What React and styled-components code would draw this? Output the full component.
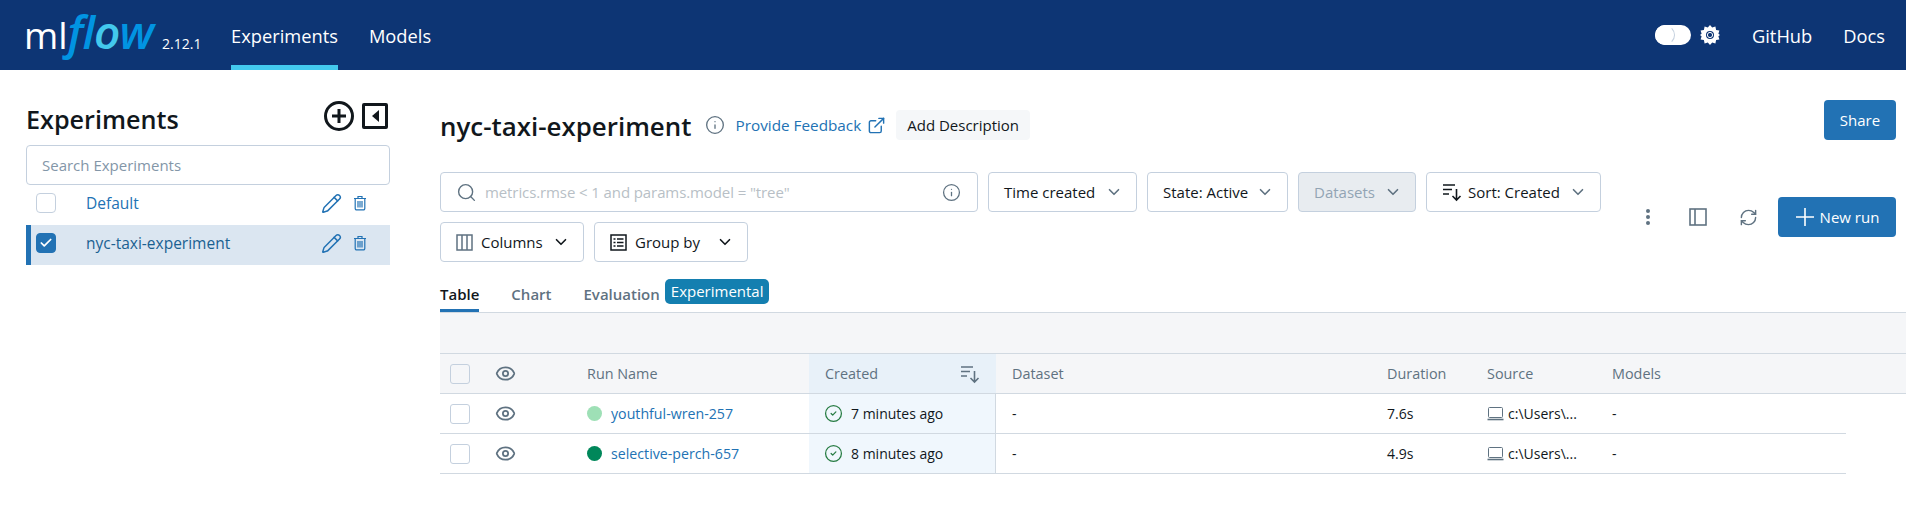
import React from "react";
import styled, { createGlobalStyle } from "styled-components";
import { Info, ExternalLink, Search, ChevronDown, RefreshCw, Check, Pencil, CircleCheck, Eye } from "lucide-react";

const Global = createGlobalStyle`
  html, body { margin: 0; padding: 0; background: #fff; }
  body { font-family: "Open Sans", "Noto Sans", sans-serif; font-size: 15px; color: #11171c; overflow: hidden; }
  * { box-sizing: border-box; }
`;
const Page = styled.div`width: 1906px; height: 505px; overflow: hidden; display: flex; flex-direction: column;`;
const TopBar = styled.header`height: 70px; flex: none; background: #0d3574; color: #fff; display: flex; align-items: stretch; padding: 0 0 0 26px;`;
const Logo = styled.div`width: 205px; flex: none; display: flex; align-items: baseline; padding-top: 13px; line-height: 36px; white-space: nowrap;`;
const LogoMl = styled.span`font-size: 37px; font-weight: 500; letter-spacing: 0; color: #fff; margin-left: -2px;`;
const LogoFlow = styled.span`font-size: 46px; font-weight: 600; font-style: italic; letter-spacing: -1px; color: #0194e2;`;
const LogoO = styled.span`color: #43c9ed;`;
const Version = styled.span`font-size: 14px; color: #fff; margin-left: 9px;`;
const NavLink = styled.a`font-size: 18.3px; color: #fff; display: flex; align-items: center; margin-right: ${p => p.$mr ?? 31}px; border-bottom: 5px solid ${p => (p.$active ? "#43c9ed" : "transparent")}; border-top: 5px solid transparent;`;
const Spacer = styled.div`flex: 1;`;
const Toggle = styled.div`width: 36px; height: 20px; border-radius: 10px; background: #fff; align-self: center; position: relative; margin-right: 9px; flex: none;`;
const Knob = styled.div`position: absolute; left: 0; top: 0; width: 20px; height: 20px; border-radius: 50%; background: #fff; border: 1px solid #c4d0de; border-left-color: #fff; border-top-color: #fff; border-bottom-color: #fff;`;
const GearWrap = styled.div`align-self: center; display: flex; margin-right: 32px;`;
const Body = styled.div`flex: 1; display: flex; min-height: 0;`;
const Side = styled.aside`width: 440px; flex: none; padding: 31px 50px 0 26px; display: flex; flex-direction: column;`;
const SideHead = styled.div`display: flex; align-items: flex-start; height: 44px; flex: none;`;
const SideTitle = styled.h1`font-size: 25.2px; font-weight: 600; margin: 2px 0 0; line-height: 32px; flex: 1; color: #11171c;`;
const BoxIcon = styled.div`width: 26px; height: 26px; margin-top: 2px; border: 3px solid #11171c; border-radius: 2px; margin-left: 8px; margin-right: 2px; display: flex; align-items: center; justify-content: center;`;
const Tri = styled.div`width: 0; height: 0; border-top: 6px solid transparent; border-bottom: 6px solid transparent; border-right: 7px solid #11171c;`;
const SearchBox = styled.div`height: 40px; border: 1px solid #c4d0de; border-radius: 4px; padding: 0 15px; display: flex; align-items: center; color: #8396a8; font-size: 15px; flex: none;`;
const ExpRow = styled.div`height: 40px; display: flex; align-items: center; padding: 0 23px 4px 5px; color: #2272b4; font-size: 15.5px; background: ${p => (p.$sel ? "#dbe6f1" : "transparent")}; border-left: 5px solid ${p => (p.$sel ? "#2272b4" : "transparent")}; flex: none;`;
const ExpBox = styled.div`width: 20px; height: 20px; border-radius: 4px; border: 1px solid ${p => (p.$on ? "#2272b4" : "#c4d0de")}; background: ${p => (p.$on ? "#2272b4" : "#fff")}; display: flex; align-items: center; justify-content: center; flex: none; margin-right: 30px;`;
const ExpName = styled.span`flex: 1; color: ${p => (p.$sel ? "#1a6191" : "#2272b4")};`;
const Main = styled.main`flex: 1; min-width: 0; padding: 30px 10px 0 0; display: flex; flex-direction: column;`;
const TitleRow = styled.div`display: flex; align-items: center; height: 50px; flex: none;`;
const Title = styled.h2`font-size: 25.9px; font-weight: 600; margin: 2px 14px 0 0; line-height: 32px; color: #11171c;`;
const Feedback = styled.a`color: #2272b4; font-size: 15.3px; margin: 0 6px 0 10px;`;
const GhostBtn = styled.button`height: 30px; background: #f5f7f9; border: 0; border-radius: 4px; padding: 0 11px; font: inherit; font-size: 15px; color: #11171c; margin-left: 10px;`;
const PrimaryBtn = styled.button`height: 40px; width: ${p => p.$w}px; background: #2272b4; border: 0; border-radius: 4px; color: #fff; font: inherit; font-size: 15px; display: flex; align-items: center; justify-content: center; gap: 5px; flex: none; margin-left: ${p => p.$ml ?? 0}px; align-self: ${p => (p.$top ? "flex-start" : "auto")};`;
const FilterArea = styled.div`display: flex; align-items: center; margin-top: 22px; flex: none;`;
const Filters = styled.div`width: 1170px; flex: none; display: flex; flex-wrap: wrap; gap: 10px; margin-right: 13px;`;
const RunSearch = styled.div`width: 538px; height: 40px; border: 1px solid #c4d0de; border-radius: 4px; display: flex; align-items: center; padding: 0 16px 0 15px; gap: 8px; font-size: 15px; color: #b8bfc6;`;
const RunSearchText = styled.span`flex: 1; letter-spacing: -0.1px;`;
const Drop = styled.div`width: ${p => p.$w}px; height: 40px; border: 1px solid #c4d0de; border-radius: 4px; display: flex; align-items: center; justify-content: space-between; padding: 0 13px 0 15px; background: ${p => (p.$off ? "#e8ecf0" : "#fff")}; color: ${p => (p.$off ? "#92a4b4" : "#11171c")}; font-size: 15px;`;
const DropLabel = styled.span`display: flex; align-items: center; gap: ${p => p.$gap ?? 6}px; white-space: nowrap;`;
const Actions = styled.div`display: flex; align-items: center; flex: 1; justify-content: flex-start;`;
const ActionIcon = styled.div`width: 50px; display: flex; justify-content: center; color: #5f7281; flex: none;`;
const Tabs = styled.div`display: flex; align-items: flex-end; margin-top: 16px; height: 34px; flex: none;`;
const Tab = styled.div`height: 100%; padding-top: 6px; font-size: 15px; font-weight: 600; color: ${p => (p.$on ? "#11171c" : "#5f7281")}; border-bottom: 3px solid ${p => (p.$on ? "#2272b4" : "transparent")}; margin-right: ${p => p.$mr}px;`;
const Badge = styled.div`height: 25px; align-self: flex-start; margin-top: 1px; padding: 0 6px; background: #147fb0; color: #fff; border-radius: 5px; font-size: 15px; line-height: 25px;`;
const Table = styled.div`margin-right: -10px; border-top: 1px solid #d1d9e1; flex: none;`;
const Band = styled.div`height: 41px; background: #f5f6f8; border-bottom: 1px solid #d1d9e1;`;
const grid = "50px 80px 239px 187px 375px 100px 125px 250px";
const HeadRow = styled.div`display: grid; grid-template-columns: ${grid} 1fr; height: 40px; background: #f5f6f8; border-bottom: 1px solid #d1d9e1; color: #5f7281; font-size: 14.4px; font-weight: 500;`;
const Row = styled.div`display: grid; grid-template-columns: ${grid}; height: 40px; border-bottom: 1px solid #d1d9e1; font-size: 14px; width: 1406px;`;
const Cell = styled.div`display: flex; align-items: center; padding-left: ${p => p.$pl ?? 16}px; white-space: nowrap; min-width: 0;`;
const CreatedHead = styled(Cell)`background: #e8f1f9; justify-content: space-between; padding-right: 16px;`;
const CreatedCell = styled(Cell)`background: #f0f7fd; border-right: 1px solid #d1d9e1; gap: 8px; padding-left: 15px;`;
const TableBox = styled.div`width: 20px; height: 20px; border: 1px solid #c4d0de; border-radius: 3px; background: ${p => (p.$head ? "#f5f6f8" : "#fff")}; margin-left: 10px;`;
const Dot = styled.span`width: 15px; height: 15px; border-radius: 50%; background: ${p => p.$c}; margin-right: 9px; flex: none;`;
const RunLink = styled.a`color: #2272b4; font-size: 14.2px;`;
const Src = styled.span`display: flex; align-items: center; gap: 4px;`;
const Plain = styled.span`display: flex; color: ${p => p.$c};`;

const Trash = () => (
  <svg width="14" height="16" viewBox="0 0 14 16" fill="none" stroke="#2272b4" strokeWidth="1.2" style={{ marginLeft: 11 }}>
    <path d="M1 3.5h12M5 3.5V1.5h4v2M2.2 3.5v10a1.4 1.4 0 0 0 1.4 1.4h6.8a1.4 1.4 0 0 0 1.4-1.4v-10M5 6v6.5M7 6v6.5M9 6v6.5" />
  </svg>
);
const SortIcon = ({ c = "#11171c", s = 20 }) => (
  <svg width={s} height={s} viewBox="0 0 20 20" fill="none" stroke={c} strokeWidth="1.6">
    <path d="M1 3h12M1 7.5h9M1 12h6M14.5 7v11M10.5 14l4 4 4-4" />
  </svg>
);
const Gear = () => (
  <svg width="20" height="20" viewBox="0 0 20 20">
    <path fill="#fff" fillRule="evenodd" d="M10 0l2.2 2.6 3.2-1 .7 3.3 3.3.7-1 3.2L20 10l-1.6 1.2 1 3.2-3.3.7-.7 3.3-3.2-1L10 20l-2.2-2.6-3.2 1-.7-3.3-3.3-.7 1-3.2L0 10l1.6-1.2-1-3.2 3.3-.7.7-3.3 3.2 1zM10 6a4 4 0 1 0 0 8 4 4 0 0 0 0-8z" />
    <circle cx="10" cy="10" r="2.6" fill="none" stroke="#fff" strokeWidth="1" />
  </svg>
);
const Laptop = () => (
  <svg width="17" height="15" viewBox="0 0 17 15" fill="none" stroke="#5f7281" strokeWidth="1">
    <rect x="1.5" y="1.5" width="14" height="10" rx="1" />
    <path d="M0.5 13.5h16" strokeWidth="1.6" />
  </svg>
);
const PanelIcon = () => (
  <svg width="18" height="18" viewBox="0 0 18 18" fill="none" stroke="#5f7281" strokeWidth="1.6">
    <rect x="1" y="1" width="16" height="16" /><path d="M6 1v16" />
  </svg>
);
const Kebab = () => (
  <svg width="6" height="18" viewBox="0 0 6 18" fill="#5f7281">
    <circle cx="3" cy="3" r="2" /><circle cx="3" cy="9" r="2" /><circle cx="3" cy="15" r="2" />
  </svg>
);
const ColumnsIcon = () => (
  <svg width="17" height="17" viewBox="0 0 17 17" fill="none" stroke="#5f7281" strokeWidth="1.5">
    <rect x="1" y="1" width="15" height="15" /><path d="M6 1v15M11 1v15" />
  </svg>
);
const ListIcon = () => (
  <svg width="17" height="17" viewBox="0 0 17 17" fill="none" stroke="#11171c" strokeWidth="1.5">
    <rect x="1" y="1" width="15" height="15" /><path d="M3.5 5h2M7 5h6.5M3.5 8.5h2M7 8.5h6.5M3.5 12h2M7 12h6.5" />
  </svg>
);
const BigPlus = () => (
  <svg width="20" height="20" viewBox="0 0 20 20" fill="none" stroke="#fff" strokeWidth="1.6">
    <path d="M10 1v18M1 10h18" />
  </svg>
);

const runs = [
  { name: "youthful-wren-257", color: "#9ee0b6", ago: "7 minutes ago", dur: "7.6s" },
  { name: "selective-perch-657", color: "#00875a", ago: "8 minutes ago", dur: "4.9s" },
];
const drops = [
  { label: "Time created", w: 149 },
  { label: "State: Active", w: 141 },
  { label: "Datasets", w: 118, off: true },
];

export default function App() {
  return (
    <Page>
      <Global />
      <TopBar>
        <Logo><LogoMl>ml</LogoMl><LogoFlow>fl<LogoO>o</LogoO>w</LogoFlow><Version>2.12.1</Version></Logo>
        <NavLink $active>Experiments</NavLink>
        <NavLink>Models</NavLink>
        <Spacer />
        <Toggle><Knob /></Toggle>
        <GearWrap><Gear /></GearWrap>
        <NavLink>GitHub</NavLink>
        <NavLink $mr={21}>Docs</NavLink>
      </TopBar>
      <Body>
        <Side>
          <SideHead>
            <SideTitle>Experiments</SideTitle>
            <Plain $c="#11171c">
              <svg width="30" height="30" viewBox="0 0 30 30" fill="none" stroke="#11171c" strokeWidth="3">
                <circle cx="15" cy="15" r="13.5" /><path d="M15 8v14M8 15h14" />
              </svg>
            </Plain>
            <BoxIcon><Tri /></BoxIcon>
          </SideHead>
          <SearchBox>Search Experiments</SearchBox>
          <ExpRow>
            <ExpBox />
            <ExpName>Default</ExpName>
            <Pencil size={21} color="#2272b4" strokeWidth={1.7} />
            <Trash />
          </ExpRow>
          <ExpRow $sel>
            <ExpBox $on><Check size={14} color="#fff" strokeWidth={3} /></ExpBox>
            <ExpName $sel>nyc-taxi-experiment</ExpName>
            <Pencil size={21} color="#2272b4" strokeWidth={1.7} />
            <Trash />
          </ExpRow>
        </Side>
        <Main>
          <TitleRow>
            <Title>nyc-taxi-experiment</Title>
            <Info size={20} color="#5f7281" strokeWidth={1.6} />
            <Feedback>Provide Feedback</Feedback>
            <ExternalLink size={19} color="#2272b4" strokeWidth={1.8} />
            <GhostBtn>Add Description</GhostBtn>
            <Spacer />
            <PrimaryBtn $w={72} $top>Share</PrimaryBtn>
          </TitleRow>
          <FilterArea>
            <Filters>
              <RunSearch>
                <Search size={21} color="#5f7281" strokeWidth={1.6} />
                <RunSearchText>metrics.rmse &lt; 1 and params.model = "tree"</RunSearchText>
                <Info size={19} color="#5f7281" strokeWidth={1.6} />
              </RunSearch>
              {drops.map(d => (
                <Drop key={d.label} $w={d.w} $off={d.off}>
                  <DropLabel>{d.label}</DropLabel>
                  <ChevronDown size={18} color="#5f7281" strokeWidth={2.2} />
                </Drop>
              ))}
              <Drop $w={175}>
                <DropLabel><SortIcon />Sort: Created</DropLabel>
                <ChevronDown size={18} color="#5f7281" strokeWidth={2.2} />
              </Drop>
              <Drop $w={144}>
                <DropLabel $gap={8}><ColumnsIcon />Columns</DropLabel>
                <ChevronDown size={18} color="#11171c" strokeWidth={2.2} />
              </Drop>
              <Drop $w={154}>
                <DropLabel $gap={8}><ListIcon />Group by</DropLabel>
                <ChevronDown size={18} color="#11171c" strokeWidth={2.2} />
              </Drop>
            </Filters>
            <Actions>
              <ActionIcon><Kebab /></ActionIcon>
              <ActionIcon><PanelIcon /></ActionIcon>
              <ActionIcon><RefreshCw size={19} strokeWidth={1.8} /></ActionIcon>
              <PrimaryBtn $w={118} $ml={5}><BigPlus />New run</PrimaryBtn>
            </Actions>
          </FilterArea>
          <Tabs>
            <Tab $on $mr={32}>Table</Tab>
            <Tab $mr={32}>Chart</Tab>
            <Tab $mr={5}>Evaluation</Tab>
            <Badge>Experimental</Badge>
          </Tabs>
          <Table>
            <Band />
            <HeadRow>
              <Cell $pl={0}><TableBox $head /></Cell>
              <Cell $pl={5}><Eye size={21} strokeWidth={2} /></Cell>
              <Cell $pl={17}>Run Name</Cell>
              <CreatedHead>Created<SortIcon c="#5f7281" /></CreatedHead>
              <Cell>Dataset</Cell>
              <Cell>Duration</Cell>
              <Cell>Source</Cell>
              <Cell>Models</Cell>
              <Cell />
            </HeadRow>
            {runs.map(r => (
              <Row key={r.name}>
                <Cell $pl={0}><TableBox /></Cell>
                <Cell $pl={5}><Eye size={21} color="#5f7281" strokeWidth={2} /></Cell>
                <Cell $pl={17}><Dot $c={r.color} /><RunLink>{r.name}</RunLink></Cell>
                <CreatedCell><CircleCheck size={19} color="#277c43" strokeWidth={1.6} />{r.ago}</CreatedCell>
                <Cell>-</Cell>
                <Cell>{r.dur}</Cell>
                <Cell><Src><Laptop />c:\Users\...</Src></Cell>
                <Cell>-</Cell>
              </Row>
            ))}
          </Table>
        </Main>
      </Body>
    </Page>
  );
}
